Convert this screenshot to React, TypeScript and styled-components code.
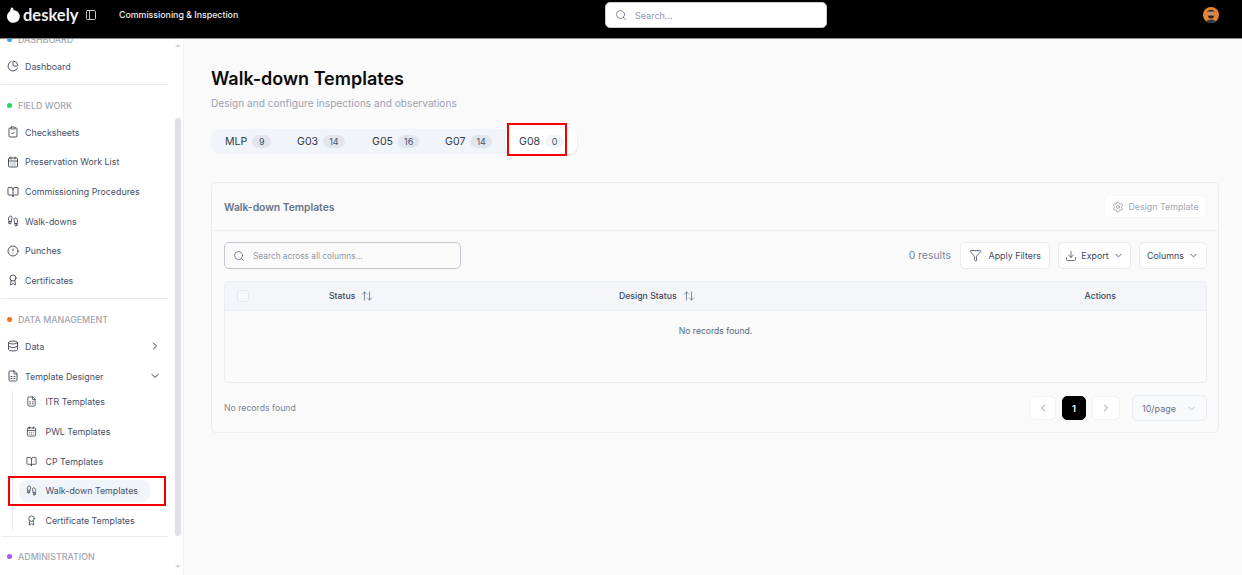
import { FunctionComponent, ReactNode } from "react";
import styled, { createGlobalStyle } from "styled-components";
import {
  ArrowUpDown,
  Award,
  BookOpen,
  CalendarDays,
  ChartPie,
  ChevronDown,
  ChevronLeft,
  ChevronRight,
  CircleAlert,
  ClipboardCheck,
  Database,
  Download,
  FileSpreadsheet,
  Footprints,
  Funnel,
  PanelLeft,
  Search,
  Settings,
} from "lucide-react";

const GlobalStyle = createGlobalStyle`
  * { box-sizing: border-box; }
  html, body { margin: 0; height: 100%; overflow: hidden; }
  body { font-family: Inter, "Liberation Sans", sans-serif; background: #fafafa; }
`;

const Page = styled.div`
  width: 1242px;
  height: 575px;
  display: flex;
  flex-direction: column;
  overflow: hidden;
`;

const TopBar = styled.header`
  height: 39px;
  flex: none;
  background: #000;
  border-bottom: 1px solid #8a8a8a;
  display: grid;
  grid-template-columns: 605px 222px 1fr;
  align-items: start;
`;

const BarLeft = styled.div`
  display: flex;
  align-items: center;
  color: #f1f1f1;
  padding-left: 7px;
  height: 29px;
`;

const Brand = styled.span`
  font-family: "Liberation Sans Narrow", Lato, sans-serif;
  font-size: 16.5px;
  font-weight: 700;
  margin-left: 3px;
  width: 50px;
`;

const PanelButton = styled.span`
  display: flex;
  margin-left: 12px;
  margin-right: 22px;
`;

const Section = styled.span`
  font-size: 8.8px;
  font-weight: 500;
`;

const TopSearch = styled.div`
  height: 26px;
  margin-top: 2px;
  background: #fff;
  border: 1px solid #c9ccd3;
  border-radius: 5px;
  display: flex;
  align-items: center;
  gap: 8px;
  padding-left: 9px;
  font-size: 9px;
  color: #8f98a8;
`;

const BarRight = styled.div`
  display: flex;
  justify-content: flex-end;
  padding: 7px 23px 0 0;
`;

const Body = styled.div`
  flex: 1;
  min-height: 0;
  display: flex;
`;

const Sidebar = styled.aside`
  width: 184px;
  flex: none;
  background: #fff;
  border-right: 1px solid #f0f1f4;
  position: relative;
  overflow: hidden;
`;

const SideInner = styled.nav`
  width: 168px;
  margin-top: -5.5px;
  padding-bottom: 20px;
`;

const GroupLabel = styled.div<{ $dot: string }>`
  height: 12px;
  display: flex;
  align-items: center;
  gap: 6px;
  padding-left: 7px;
  font-size: 8.85px;
  font-weight: 500;
  color: #9fa5b1;
  margin-bottom: 6px;

  &::before {
    content: "";
    width: 5px;
    height: 5px;
    border-radius: 50%;
    background: ${(p) => p.$dot};
  }
`;

const Row = styled.div`
  height: 29.6px;
  display: flex;
  align-items: center;
  gap: 6px;
  padding-left: 7px;
  padding-right: 7px;
  font-size: 8.85px;
  color: #475069;
  white-space: nowrap;

  svg { flex: none; color: #333a48; }
`;

const RowEnd = styled.span`
  margin-left: auto;
  display: flex;
`;

const Divider = styled.div<{ $top: number; $bottom: number }>`
  height: 1px;
  background: #e8ebf1;
  margin: ${(p) => p.$top}px 0 ${(p) => p.$bottom}px 1px;
`;

const SubList = styled.div`
  margin-left: 12px;
  border-left: 1px solid #e8ebf1;
  padding-left: 7px;
  width: 155px;
`;

const SubRow = styled(Row)<{ $active?: boolean }>`
  height: 22px;
  margin-bottom: 7.6px;
  padding-left: 7px;
  margin-left: -1px;
  width: 131px;
  border-radius: 8px;
  position: relative;
  background: ${(p) => (p.$active ? "#f1f5f9" : "transparent")};
  &:last-child { margin-bottom: 5px; }
`;

/* red annotation boxes drawn over the screenshot */
const Marker = styled.span<{ $inset: string }>`
  position: absolute;
  inset: ${(p) => p.$inset};
  border: 2.5px solid #f20000;
  pointer-events: none;
`;

const Track = styled.div`
  position: absolute;
  top: 0;
  bottom: 0;
  right: 1px;
  width: 7px;
  background: #fff;

  &::before,
  &::after {
    content: "";
    position: absolute;
    left: 0;
    border-left: 3px solid transparent;
    border-right: 3px solid transparent;
  }
  &::before { top: 5px; border-bottom: 3px solid #d4d6da; }
  &::after { bottom: 7px; border-top: 3px solid #d4d6da; }
`;

const Thumb = styled.div`
  position: absolute;
  top: 79px;
  left: 0;
  width: 6px;
  height: 418px;
  border-radius: 3px;
  background: #dfe1e5;
`;

const Main = styled.main`
  flex: 1;
  min-width: 0;
  padding: 29px 23px 0 27px;
  background: #fafafa;
`;

const Title = styled.h1`
  margin: 0;
  font-size: 18px;
  line-height: 22px;
  font-weight: 600;
  color: #0a0a0a;
`;

const Subtitle = styled.p`
  margin: 6px 0 0;
  font-size: 10.15px;
  line-height: 15px;
  color: #9aa3b2;
`;

const Tabs = styled.div`
  display: flex;
  width: 366px;
  margin-top: 18px;
  height: 25px;
  background: #f1f5f9;
  border-radius: 8px;
  align-items: center;
`;

const Tab = styled.div<{ $active?: boolean; $width: number }>`
  width: ${(p) => p.$width}px;
  height: 25px;
  display: flex;
  align-items: center;
  gap: 5px;
  padding-left: 14px;
  font-size: 10.6px;
  color: #333a48;
  border-radius: 8px;
  background: ${(p) => (p.$active ? "#fff" : "transparent")};
  box-shadow: ${(p) => (p.$active ? "0 1px 2px rgba(15,23,42,.12)" : "none")};
  position: relative;
`;

const Count = styled.span<{ $active?: boolean }>`
  min-width: 19px;
  height: 13px;
  padding: 0 6px;
  border-radius: 7px;
  background: ${(p) => (p.$active ? "#f1f5f9" : "#e2e6ec")};
  font-size: 9px;
  display: flex;
  align-items: center;
  justify-content: center;
  color: #475069;
`;

const Card = styled.section`
  margin-top: 28px;
  height: 251px;
  border: 1px solid #e9ecf2;
  border-radius: 5px;
  background: #fafafa;
`;

const CardHead = styled.div`
  height: 48px;
  border-bottom: 1px solid #eceff4;
  display: flex;
  align-items: center;
  justify-content: space-between;
  padding: 0 11px 0 12px;
`;

const CardTitle = styled.h2`
  margin: 0;
  font-size: 10.3px;
  font-weight: 600;
  color: #64748b;
`;

const DesignButton = styled.div`
  width: 103px;
  height: 23px;
  background: #fff;
  border: 1px solid #f5f6f8;
  border-radius: 5px;
  display: flex;
  align-items: center;
  justify-content: center;
  gap: 4px;
  font-size: 8.9px;
  color: #a2a7b1;

  svg { color: #8b909a; }
`;

const Toolbar = styled.div`
  display: flex;
  align-items: center;
  padding: 11px 11px 0 12px;
  height: 38px;
`;

const SearchBox = styled.div`
  width: 237px;
  height: 27px;
  border: 1px solid #c3c6ce;
  border-radius: 5px;
  display: flex;
  align-items: center;
  gap: 8px;
  padding-left: 8px;
  font-size: 8.3px;
  color: #8f98a8;
  margin-right: auto;

  svg { color: #5b6679; }
`;

const Results = styled.span`
  font-size: 10.4px;
  color: #7b8494;
  margin-right: 1px;
`;

const ToolButton = styled.div<{ $width: number }>`
  width: ${(p) => p.$width}px;
  height: 27px;
  background: #fff;
  border: 1px solid #e8ebf1;
  border-radius: 5px;
  margin-left: 8px;
  display: flex;
  align-items: center;
  justify-content: center;
  gap: 4px;
  font-size: 8.9px;
  color: #3d4658;
`;

const Table = styled.div`
  margin: 12px 11px 0 12px;
  height: 102px;
  border: 1px solid #e9ecf2;
  border-radius: 5px;
  overflow: hidden;
`;

const TableHead = styled.div`
  height: 29px;
  background: #f4f5f8;
  border-bottom: 1px solid #e9ecf2;
  display: grid;
  grid-template-columns: 92px 290px 1fr auto;
  align-items: center;
  padding-right: 90px;
  padding-left: 12px;
  font-size: 8.7px;
  font-weight: 500;
  color: #3d4658;
`;

const Check = styled.span`
  width: 12px;
  height: 12px;
  border: 1px solid #e6e8ed;
  border-radius: 3px;
  background: #f7f8fa;
`;

const HeadCell = styled.span<{ $col: number }>`
  display: flex;
  align-items: center;
  gap: 6px;
  grid-column: ${(p) => p.$col};

  svg { color: #5b6679; }
`;

const Empty = styled.div`
  height: 39px;
  display: flex;
  align-items: center;
  justify-content: center;
  font-size: 8.6px;
  color: #5b6679;
`;

const Footer = styled.div`
  display: flex;
  align-items: center;
  padding: 12px 11px 0 12px;
  font-size: 8.7px;
  color: #7b8494;
`;

const Pager = styled.div`
  margin-left: auto;
  display: flex;
  align-items: center;
  gap: 6px;
  margin-right: 12px;
`;

const PageButton = styled.span<{ $active?: boolean; $width: number }>`
  width: ${(p) => p.$width}px;
  height: 24px;
  border-radius: 5px;
  background: ${(p) => (p.$active ? "#000" : "#fff")};
  color: ${(p) => (p.$active ? "#fff" : "#6a7484")};
  border: 1px solid ${(p) => (p.$active ? "#000" : "#f1f2f5")};
  display: flex;
  align-items: center;
  justify-content: center;
  font-size: 9.4px;
  font-weight: 600;
`;

const PageSize = styled.div`
  width: 75px;
  height: 26px;
  background: #f8f9fb;
  border: 1px solid #e9ecf2;
  border-radius: 5px;
  display: flex;
  align-items: center;
  justify-content: space-between;
  padding: 0 9px 0 9px;
  font-size: 9px;
  color: #6a7484;

  svg { color: #a5adba; }
`;

const Logo: FunctionComponent = () => (
  <svg width="13" height="16" viewBox="0 0 13 16">
    <path d="M4.2 0.5 C6 0.4 6.8 1.6 6.4 3.2 C10 3.2 12.8 5.8 12.8 9.3 C12.8 13 10 15.8 6.4 15.8 C2.8 15.8 0 13 0 9.4 C0 7 1.2 5.6 2.6 4.4 C3.8 3.3 3.4 1.6 4.2 0.5 Z" fill="#fff" />
  </svg>
);

const Avatar: FunctionComponent = () => (
  <svg width="16" height="16" viewBox="0 0 16 16">
    <circle cx="8" cy="8" r="8" fill="#e8832f" />
    <path d="M3 15 C3.5 11.5 12.5 11.5 13 15 C11 16.4 5 16.4 3 15 Z" fill="#2f3a46" />
    <ellipse cx="8" cy="7.4" rx="3.3" ry="4.2" fill="#c98f6c" />
    <path d="M4.5 5.6 C4.2 1.8 11.8 1.8 11.5 5.6 L10.6 4.6 L5.4 4.6 Z" fill="#2e211a" />
    <path d="M4.6 7.4 C4.8 13 11.2 13 11.4 7.4 C10.8 9.4 9.4 8.6 8 8.6 C6.6 8.6 5.2 9.4 4.6 7.4 Z" fill="#2e211a" />
  </svg>
);

const IconProps = { size: 12, strokeWidth: 1.7 };
const SmallProps = { size: 11, strokeWidth: 1.7 };

const NavRow: FunctionComponent<{ icon: ReactNode; label: string; end?: ReactNode }> = ({ icon, label, end }) => (
  <Row>
    {icon}
    {label}
    {end && <RowEnd>{end}</RowEnd>}
  </Row>
);

const tabs = [
  { name: "MLP", count: 9, width: 72 },
  { name: "G03", count: 14, width: 75 },
  { name: "G05", count: 16, width: 73 },
  { name: "G07", count: 14, width: 74 },
  { name: "G08", count: 0, width: 72, active: true },
];

const App: FunctionComponent = () => {
  return (
    <Page>
      <GlobalStyle />
      <TopBar>
        <BarLeft>
          <Logo />
          <Brand>deskely</Brand>
          <PanelButton>
            <PanelLeft size={12} strokeWidth={1.6} />
          </PanelButton>
          <Section>Commissioning &amp; Inspection</Section>
        </BarLeft>
        <TopSearch>
          <Search size={12} strokeWidth={1.5} color="#5b6679" />
          Search...
        </TopSearch>
        <BarRight>
          <Avatar />
        </BarRight>
      </TopBar>
      <Body>
        <Sidebar>
          <SideInner>
            <GroupLabel $dot="#3b9ff6">DASHBOARD</GroupLabel>
            <NavRow icon={<ChartPie {...IconProps} />} label="Dashboard" />
            <Divider $top={2.5} $bottom={15} />
            <GroupLabel $dot="#22d566">FIELD WORK</GroupLabel>
            <NavRow icon={<ClipboardCheck {...IconProps} />} label="Checksheets" />
            <NavRow icon={<CalendarDays {...IconProps} />} label="Preservation Work List" />
            <NavRow icon={<BookOpen {...IconProps} />} label="Commissioning Procedures" />
            <NavRow icon={<Footprints {...IconProps} />} label="Walk-downs" />
            <NavRow icon={<CircleAlert {...IconProps} />} label="Punches" />
            <NavRow icon={<Award {...IconProps} />} label="Certificates" />
            <Divider $top={3} $bottom={14.5} />
            <GroupLabel $dot="#f97316">DATA MANAGEMENT</GroupLabel>
            <NavRow icon={<Database {...IconProps} />} label="Data" end={<ChevronRight size={12} strokeWidth={2} />} />
            <NavRow icon={<FileSpreadsheet {...IconProps} />} label="Template Designer" end={<ChevronDown size={12} strokeWidth={2} />} />
            <SubList>
              <SubRow><FileSpreadsheet {...SmallProps} />&nbsp;ITR Templates</SubRow>
              <SubRow><CalendarDays {...SmallProps} />&nbsp;PWL Templates</SubRow>
              <SubRow><BookOpen {...SmallProps} />&nbsp;CP Templates</SubRow>
              <SubRow $active>
                <Footprints {...SmallProps} />
                &nbsp;Walk-down Templates
                <Marker $inset="-4px -16px -4px -11px" />
              </SubRow>
              <SubRow><Award {...SmallProps} />&nbsp;Certificate Templates</SubRow>
            </SubList>
            <Divider $top={5} $bottom={13} />
            <GroupLabel $dot="#a855f7">ADMINISTRATION</GroupLabel>
          </SideInner>
          <Track>
            <Thumb />
          </Track>
        </Sidebar>
        <Main>
          <Title>Walk-down Templates</Title>
          <Subtitle>Design and configure inspections and observations</Subtitle>
          <Tabs>
            {tabs.map((t) => (
              <Tab key={t.name} $active={t.active} $width={t.width}>
                {t.name}
                <Count $active={t.active}>{t.count}</Count>
                {t.active && <Marker $inset="-6px 10px -2px 2px" />}
              </Tab>
            ))}
          </Tabs>
          <Card>
            <CardHead>
              <CardTitle>Walk-down Templates</CardTitle>
              <DesignButton>
                <Settings size={12} strokeWidth={1.5} />
                Design Template
              </DesignButton>
            </CardHead>
            <Toolbar>
              <SearchBox>
                <Search size={12} strokeWidth={1.5} />
                Search across all columns...
              </SearchBox>
              <Results>0 results</Results>
              <ToolButton $width={90}>
                <Funnel size={13} strokeWidth={1.5} />
                &nbsp;Apply Filters
              </ToolButton>
              <ToolButton $width={73}>
                <Download size={12} strokeWidth={1.5} />
                Export
                <ChevronDown size={11} strokeWidth={1.8} />
              </ToolButton>
              <ToolButton $width={68}>
                Columns
                <ChevronDown size={11} strokeWidth={1.8} />
              </ToolButton>
            </Toolbar>
            <Table>
              <TableHead>
                <Check />
                <HeadCell $col={2}>
                  Status
                  <ArrowUpDown size={12} strokeWidth={1.5} />
                </HeadCell>
                <HeadCell $col={3}>
                  Design Status
                  <ArrowUpDown size={12} strokeWidth={1.5} />
                </HeadCell>
                <HeadCell $col={4}>Actions</HeadCell>
              </TableHead>
              <Empty>No records found.</Empty>
            </Table>
            <Footer>
              No records found
              <Pager>
                <PageButton $width={27}><ChevronLeft size={12} strokeWidth={1.6} /></PageButton>
                <PageButton $width={24} $active>1</PageButton>
                <PageButton $width={28}><ChevronRight size={12} strokeWidth={1.6} /></PageButton>
              </Pager>
              <PageSize>
                10/page
                <ChevronDown size={11} strokeWidth={1.6} />
              </PageSize>
            </Footer>
          </Card>
        </Main>
      </Body>
    </Page>
  );
};

export default App;
